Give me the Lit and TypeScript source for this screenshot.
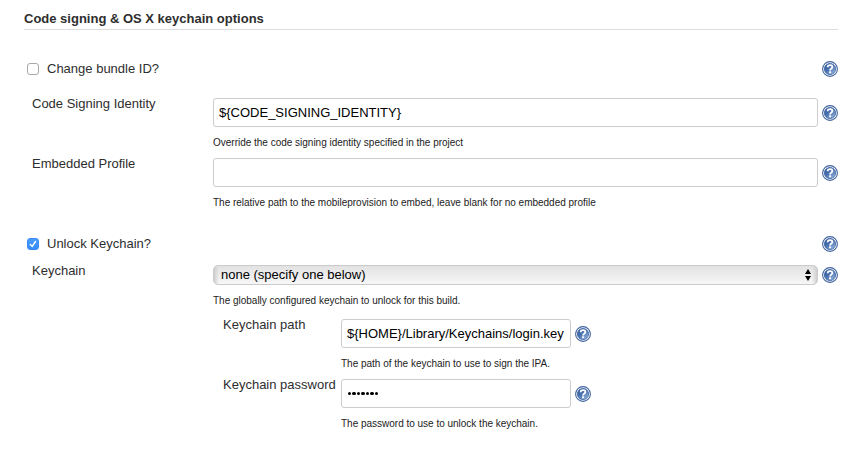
import { LitElement, html, css } from "lit";
import { customElement, property } from "lit/decorators.js";

@customElement("help-icon")
class HelpIcon extends LitElement {
  static styles = css`
    :host { display: block; width: 16px; height: 16px; flex: none; }
    svg { display: block; }
  `;
  render() {
    return html`<svg width="16" height="16" viewBox="0 0 16 16">
      <defs>
        <linearGradient id="g" x1="0.1" y1="0" x2="0.9" y2="1">
          <stop offset="0" stop-color="#2c5596" />
          <stop offset="0.5" stop-color="#4d76b4" />
          <stop offset="1" stop-color="#a3c1e6" />
        </linearGradient>
      </defs>
      <circle cx="8" cy="8" r="7.4" fill="#fff" stroke="#3f639f" stroke-width="1.1" />
      <circle cx="8" cy="8" r="5.6" fill="url(#g)" stroke="#3f639f" stroke-width="0.8" />
      <path d="M5.6 6.2C5.7 4.6 6.8 4.1 8.1 4.1C9.5 4.1 10.4 4.8 10.4 5.9C10.4 7.5 8.1 7.5 8.1 9.4" fill="none" stroke="#fff" stroke-width="1.8" />
      <rect x="7.1" y="10.3" width="2" height="1.9" fill="#fff" />
    </svg>`;
  }
}

@customElement("check-row")
class CheckRow extends LitElement {
  @property() label = "";
  @property({ type: Boolean }) checked = false;
  static styles = css`
    :host { display: flex; align-items: center; height: 16px; padding-left: 27px; }
    .box { box-sizing: border-box; width: 12px; height: 12px; border: 1px solid #a9a9a9; border-radius: 3px; background: #fff; flex: none; }
    .box.on { border-color: #3b8bf6; background: linear-gradient(#4a9bfb, #348af8); }
    .box svg { display: block; }
    .text { margin-left: 8px; flex: 1; line-height: 16px; white-space: nowrap; }
  `;
  render() {
    return html`
      <div class="box ${this.checked ? "on" : ""}">
        ${this.checked
          ? html`<svg width="10" height="10" viewBox="0 0 10 10"><path d="M2.3 5.5L4.2 7.4L7.5 2.5" fill="none" stroke="#fff" stroke-width="1.4" stroke-linecap="round" /></svg>`
          : ""}
      </div>
      <span class="text">${this.label}</span>
      <help-icon></help-icon>
    `;
  }
}

@customElement("field-row")
class FieldRow extends LitElement {
  @property() label = "";
  @property() value = "";
  @property() hint = "";
  @property() kind = "text";
  static styles = css`
    :host { display: grid; grid-template-columns: var(--label-width, 181px) var(--field-width, 605px) 16px; column-gap: 0; align-content: start; }
    .label { line-height: 16px; margin-top: -2px; white-space: nowrap; }
    .input { box-sizing: border-box; height: 29px; border: 1px solid #ccc; border-radius: 3px; padding: 0 5px; line-height: 27px; color: #000; white-space: nowrap; background: #fff; }
    .password { display: flex; align-items: center; gap: 1.3px; padding-left: 6px; }
    .password i { width: 3.2px; height: 3.2px; border-radius: 50%; background: #000; }
    .select { box-sizing: border-box; height: 20px; display: flex; align-items: center; justify-content: space-between; border: 1px solid #cbcbcb; border-radius: 5px; padding: 0 5px 0 7px; color: #000; line-height: 18px; background: linear-gradient(90deg, #cfcfcf, #cfcfcf00 5px, #cfcfcf00 calc(100% - 5px), #cfcfcf), linear-gradient(#e2e2e2, #f7f7f7); }
    .select svg { display: block; }
    .hint { grid-column: 2; font-size: 10px; line-height: 14px; margin-top: 9px; white-space: nowrap; color: #222; letter-spacing: -0.01px; }
    help-icon { align-self: center; margin-left: 4px; }
  `;
  control() {
    if (this.kind === "password")
      return html`<div class="input password">${[...this.value].map(() => html`<i></i>`)}</div>`;
    if (this.kind === "select")
      return html`<div class="select">
        <span>${this.value}</span>
        <svg width="8" height="12" viewBox="0 0 8 12"><path d="M1 5L4 0L7 5ZM1 7L4 12L7 7Z" fill="#000" /></svg>
      </div>`;
    return html`<div class="input">${this.value}</div>`;
  }
  render() {
    return html`
      <div class="label">${this.label}</div>
      ${this.control()}
      <help-icon></help-icon>
      <div class="hint">${this.hint}</div>
    `;
  }
}

@customElement("app-root")
class AppRoot extends LitElement {
  static styles = css`
    :host { display: block; box-sizing: border-box; width: 858px; height: 452px; overflow: hidden; background: #fff; color: #2e2e2e; font: 13px "Liberation Sans", Arial, sans-serif; }
    .title { box-sizing: border-box; margin: 0 20px 0 24px; height: 30px; padding-top: 11px; font-size: 13px; font-weight: 700; line-height: 16px; border-bottom: 1px solid #ddd; }
    .bundle { margin: 31px 20px 0 0; }
    .unlock { margin: 18px 20px 0 0; }
    .main { padding-left: 32px; height: 60px; }
    .first { margin-top: 21px; }
    .chain { margin-top: 13px; height: 54px; }
    .nested { padding-left: 223px; height: 60px; --label-width: 118px; --field-width: 230px; }
  `;
  render() {
    return html`
      <div class="title">Code signing &amp; OS X keychain options</div>
      <check-row class="bundle" label="Change bundle ID?"></check-row>
      <field-row class="main first" label="Code Signing Identity" value=${"${CODE_SIGNING_IDENTITY}"}
        hint="Override the code signing identity specified in the project"></field-row>
      <field-row class="main" label="Embedded Profile"
        hint="The relative path to the mobileprovision to embed, leave blank for no embedded profile"></field-row>
      <check-row class="unlock" label="Unlock Keychain?" checked></check-row>
      <field-row class="main chain" kind="select" label="Keychain" value="none (specify one below)"
        hint="The globally configured keychain to unlock for this build."></field-row>
      <field-row class="nested" label="Keychain path" value=${"${HOME}/Library/Keychains/login.key"}
        hint="The path of the keychain to use to sign the IPA."></field-row>
      <field-row class="nested" kind="password" label="Keychain password" value="•••••••"
        hint="The password to use to unlock the keychain."></field-row>
    `;
  }
}
